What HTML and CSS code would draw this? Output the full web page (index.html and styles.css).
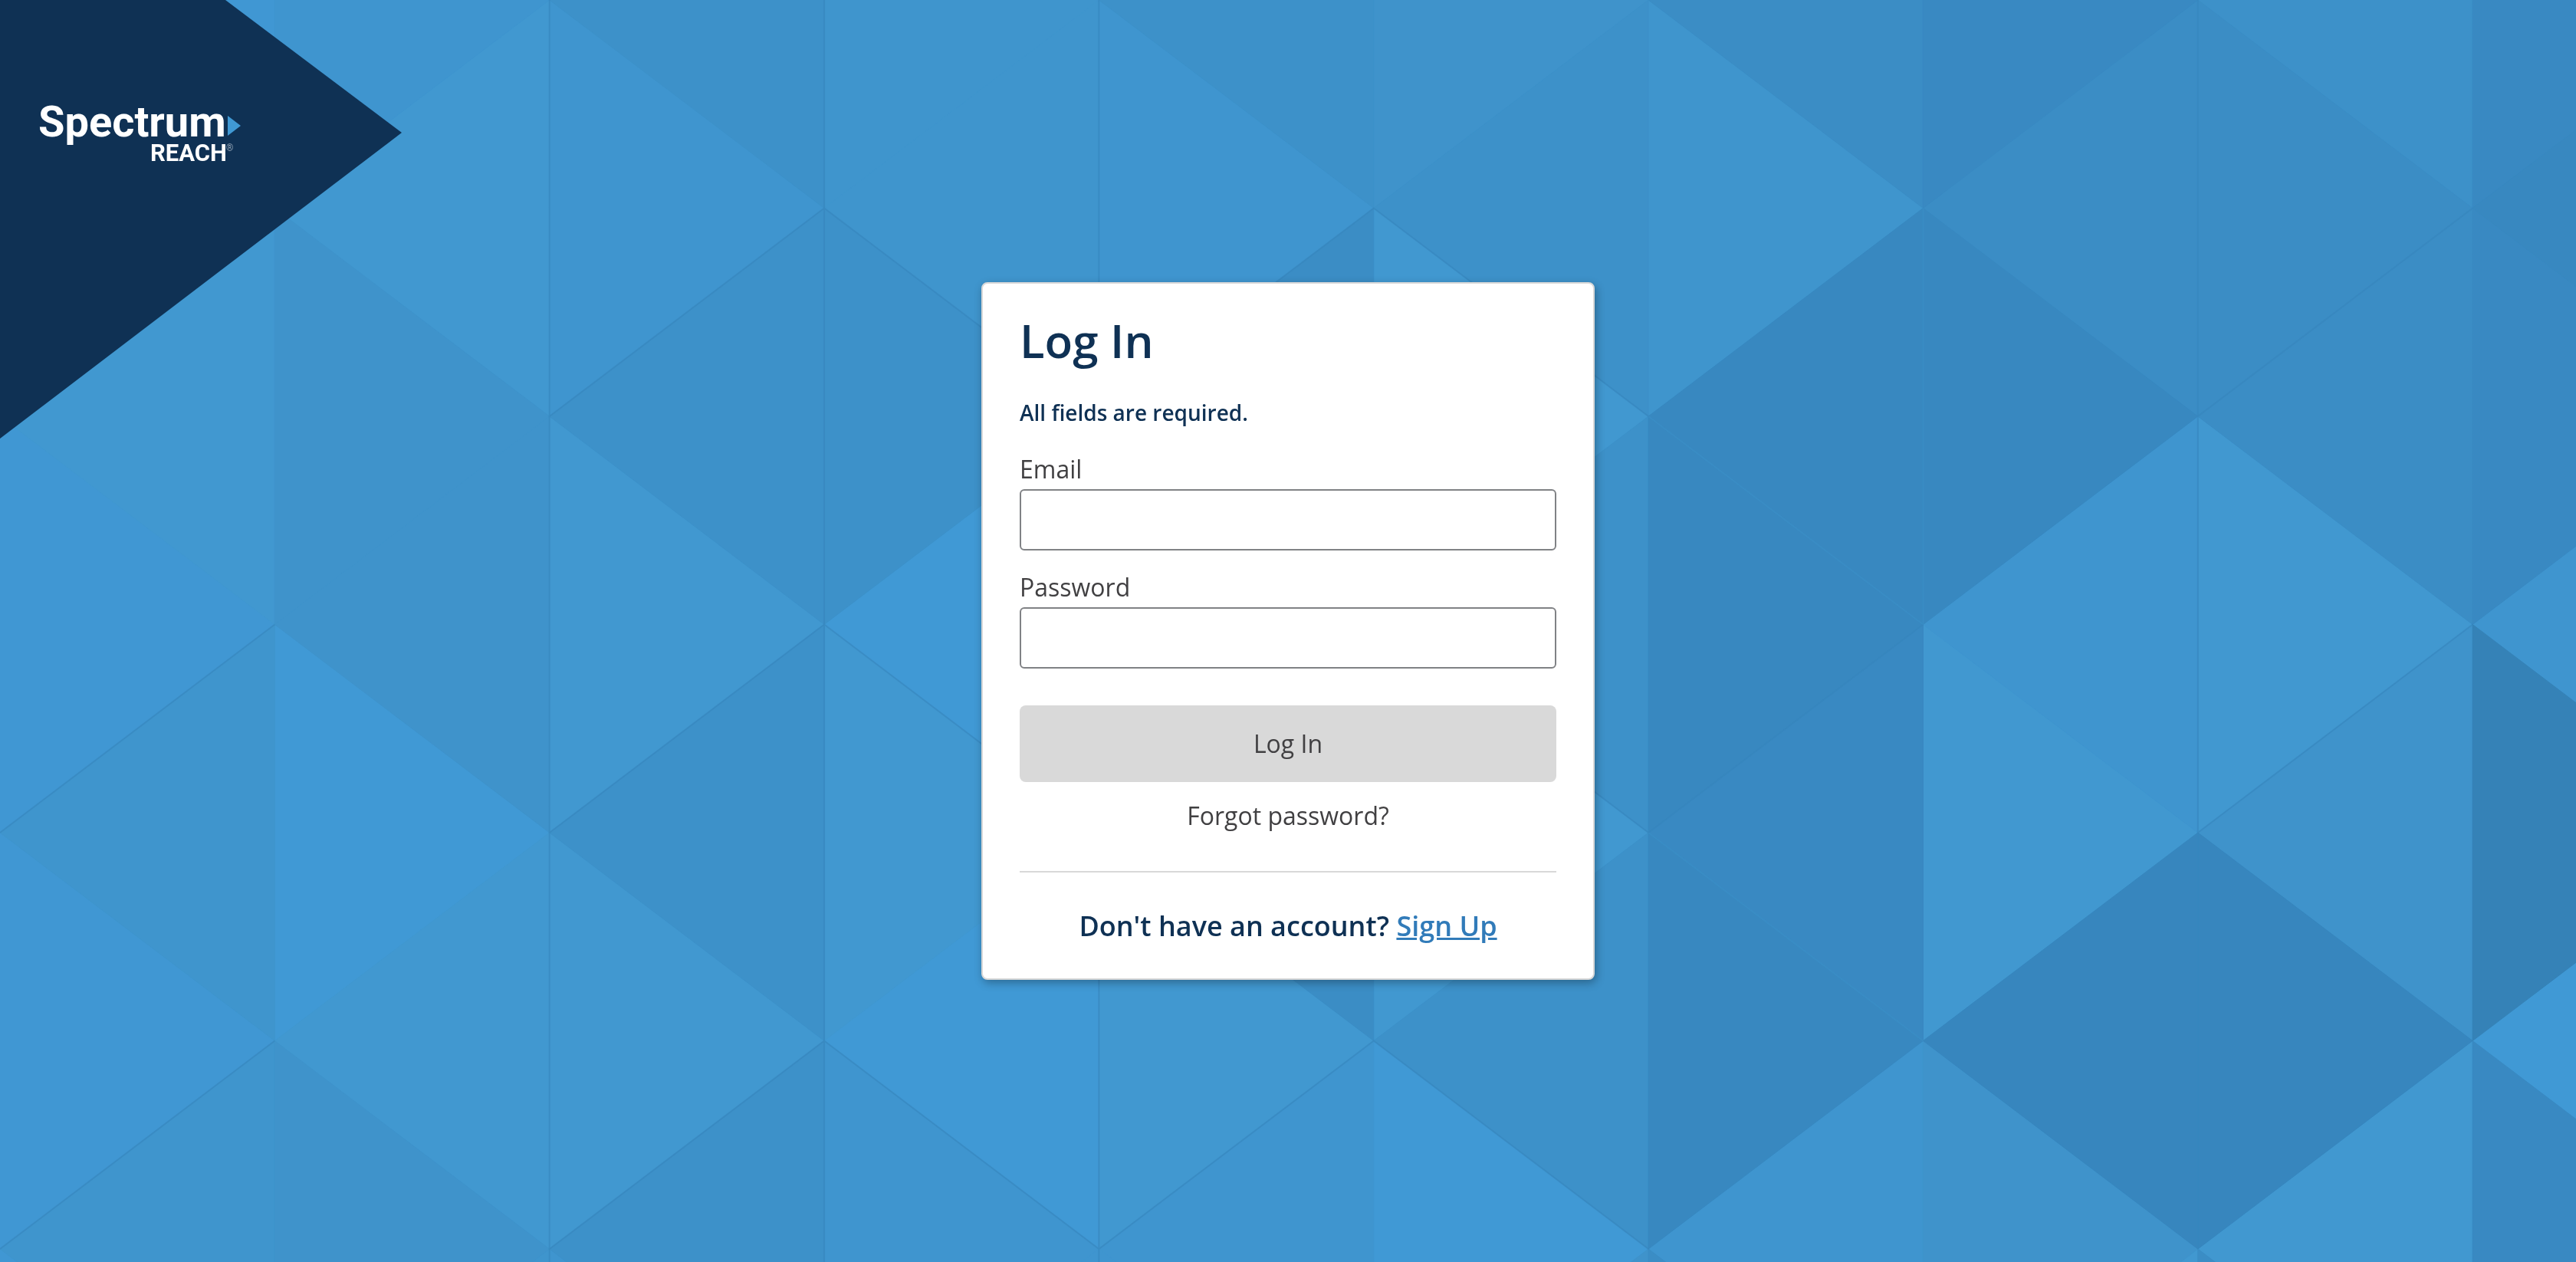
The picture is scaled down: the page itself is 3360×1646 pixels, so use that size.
FILE: index.html
```html
<!DOCTYPE html>
<html lang="en">
<head>
<meta charset="utf-8">
<meta name="viewport" content="width=device-width, initial-scale=1">
<title>Log In | Spectrum Reach</title>
<link rel="stylesheet" href="styles.css">
</head>
<body class="page">
<!-- Triangle mosaic, in grid units: one column wide, half a triangle high -->
<svg class="backdrop" viewBox="0 0 3360 1646" preserveAspectRatio="xMidYMid slice" aria-hidden="true">
  <g transform="scale(358.35 271.5)">
    <g class="facets">
      <path class="tone-1" d="M2 4l-1-1v2z M3 3l1-1v2z M3 5l1-1v2z M6 6l-1-1v2z M9 5l1-1v2z"/>
      <path class="tone-2" d="M0 0l1-1v2z M1 3l-1-1v2z M1 5l-1-1v2z M1 7l-1-1v2z"/>
      <path class="tone-3" d="M0 2l1-1v2z M1 1l1-1v2z M3 3l-1-1v2z M6 2l-1-1v2z M8 4l-1-1v2z M9 3l-1-1v2z M8 6l1-1v2z M1 5l1-1v2z M3 5l-1-1v2z M4 4l-1-1v2z M5 5l-1-1v2z M6 4l-1-1v2z M7 7l1-1v2z"/>
      <path class="tone-4" d="M2 0l-1-1v2z M3 1l-1-1v2z M5 1l-1-1v2z M7 3l1-1v2z M6 6l1-1v2z M9 3l1-1v2z M4 6l-1-1v2z M4 6l1-1v2z M3 7l-1-1v2z M5 7l-1-1v2z M3 7l1-1v2z"/>
      <path class="tone-5" d="M0 4l1-1v2z M0 6l1-1v2z M4 0l-1-1v2z M3 1l1-1v2z M7 1l-1-1v2z M1 7l1-1v2z"/>
      <path class="tone-6" d="M2 2l-1-1v2z M2 6l-1-1v2z M6 0l-1-1v2z M8 6l-1-1v2z M8 4l1-1v2z M1 3l1-1v2z M5 7l1-1v2z"/>
      <path class="tone-7" d="M2 0l1-1v2z M2 2l1-1v2z M2 4l1-1v2z M2 6l1-1v2z M4 2l-1-1v2z M4 0l1-1v2z M5 1l1-1v2z M5 3l1-1v2z M5 5l1-1v2z M8 0l1-1v2z"/>
      <path class="tone-8" d="M4 2l1-1v2z M4 4l1-1v2z M6 0l1-1v2z M7 1l1-1v2z M9 1l-1-1v2z M8 2l1-1v2z M7 7l-1-1v2z M9 7l-1-1v2z"/>
      <path class="tone-9" d="M8 0l-1-1v2z M10 0l-1-1v2z M10 2l-1-1v2z M10 6l-1-1v2z M6 4l1-1v2z"/>
      <path class="tone-10" d="M6 2l1-1v2z M7 3l-1-1v2z M7 5l-1-1v2z M8 2l-1-1v2z M9 1l1-1v2z"/>
      <path class="tone-11" d="M7 5l1-1v2z M9 5l-1-1v2z"/>
      <path class="tone-12" d="M10 4l-1-1v2z"/>
    </g>
    <path class="crease" d="M2 0v7 M3 0v7 M4 0v2.5 M4 4v3 M8 0v4 M2 2l1-1 2 2 M4 2l1-1 1 1 M1 3l-1 1 M1 5l-1 1 M2 4l1-1 1 1 M2 6l1-1 1 1 1-1 1 1 M5 3l1 1 M7 3l-1 1 M9 1l-1 1 M9 3l-1 1"/>
    <path class="crease crease--light" d="M6 2l1 1 M6 4l1 1 M7 1v2"/>
  </g>
</svg>

<header class="brand">
  <svg class="brand__logo" width="270" height="84" viewBox="0 0 270 84" role="img" aria-label="Spectrum Reach">
    <text class="brand__name" x="-2" y="44">Spectrum</text>
    <path class="brand__arrow" d="M245 17l17 13-17 13z"/>
    <text class="brand__unit" x="244" y="76">REACH</text>
    <text class="brand__mark" x="243" y="63">®</text>
  </svg>
</header>

<main class="stage">
  <section class="card" aria-labelledby="login-title">
    <h1 class="card__title" id="login-title">Log In</h1>
    <p class="card__note">All fields are required.</p>
    <form class="form">
      <div class="field">
        <label class="field__label" for="email">Email</label>
        <input class="field__input" id="email" type="email" required>
      </div>
      <div class="field">
        <label class="field__label" for="password">Password</label>
        <input class="field__input" id="password" type="password" required>
      </div>
      <button class="form__submit" type="submit" disabled>Log In</button>
    </form>
    <a class="card__forgot" href="#forgot">Forgot password?</a>
    <hr class="card__rule">
    <p class="card__signup">Don't have an account? <a class="card__link" href="#signup">Sign Up</a></p>
  </section>
</main>
</body>
</html>
```
FILE: styles.css
```css
* {
  box-sizing: border-box;
}

.page {
  display: grid;
  min-height: 100vh;
  margin: 0;
  background: #3f94cc;
  color: #414042;
  font-family: "Open Sans", "Noto Sans", sans-serif;
  font-size: 32px;
  line-height: 44px;
}

/* Backdrop */
.backdrop {
  position: fixed;
  inset: 0;
  z-index: -1;
  width: 100%;
  height: 100%;
}

.facets path {
  fill: currentColor;
  stroke: currentColor;
  stroke-width: 1px;
  vector-effect: non-scaling-stroke;
}

.tone-1 { color: #4099d5; }
.tone-2 { color: #4097d3; }
.tone-3 { color: #4198d0; }
.tone-4 { color: #3f95cf; }
.tone-5 { color: #3f95cd; }
.tone-6 { color: #3f93cb; }
.tone-7 { color: #3d91c9; }
.tone-8 { color: #3b8dc5; }
.tone-9 { color: #3989c2; }
.tone-10 { color: #3888c0; }
.tone-11 { color: #3786be; }
.tone-12 { color: #3582b7; }

.crease {
  fill: none;
  stroke: #3785bd;
  stroke-opacity: 0.6;
  stroke-width: 2px;
  vector-effect: non-scaling-stroke;
}

.crease--light {
  stroke: #3f94cc;
  stroke-opacity: 0.35;
}

/* Brand corner */
.brand {
  grid-area: 1 / 1;
  width: 524px;
  height: 572px;
  padding: 134px 52px;
  background: #0f3154;
  clip-path: polygon(0 0, 294px 0, 524px 173px, 0 572px);
}

.brand__logo {
  display: block;
  overflow: visible;
  fill: #fff;
  font-family: Roboto, "Liberation Sans", sans-serif;
  font-weight: 700;
}

.brand__name {
  font-size: 56px;
}

.brand__arrow {
  fill: #4099d4;
}

.brand__unit {
  font-size: 31px;
  text-anchor: end;
}

.brand__mark {
  font-size: 12px;
  font-weight: 400;
  fill: #8ea0b2;
}

/* Log-in card */
.stage {
  grid-area: 1 / 1;
  display: flex;
  align-items: center;
  justify-content: center;
}

.card {
  z-index: 1;
  display: flex;
  flex-direction: column;
  width: 100%;
  max-width: 800px;
  padding: 48px 48px 44px;
  border: 2px solid #d8d8d8;
  border-radius: 8px;
  background: #fff;
  box-shadow: 2px 4px 12px rgba(0, 0, 0, 0.3);
}

.card__title,
.card__note,
.card__signup {
  margin: 0;
  color: #0f3154;
  font-weight: 600;
}

.card__title {
  font-size: 60px;
  line-height: 52px;
}

.card__note {
  margin: 48px 0 32px;
  font-size: 28px;
  line-height: 40px;
}

.form {
  display: flex;
  flex-direction: column;
  gap: 26px;
}

.field {
  display: flex;
  flex-direction: column;
  gap: 4px;
}

.field__input {
  width: 100%;
  height: 80px;
  padding: 0 24px;
  border: 2px solid #808285;
  border-radius: 6px;
  background: #fff;
  color: inherit;
  font: inherit;
}

.form__submit {
  height: 100px;
  margin-top: 22px;
  padding: 0;
  border: 0;
  border-radius: 8px;
  background: #d9d9d9;
  color: #414042;
  font: inherit;
}

.card__forgot {
  align-self: center;
  margin-top: 22px;
  color: inherit;
  text-decoration: none;
}

.card__rule {
  width: 100%;
  margin: 50px 0 46px;
  border: 0;
  border-top: 2px solid #d8d8d8;
}

.card__signup {
  font-size: 36px;
  line-height: 48px;
  text-align: center;
}

.card__link {
  color: #317bb9;
}
```
